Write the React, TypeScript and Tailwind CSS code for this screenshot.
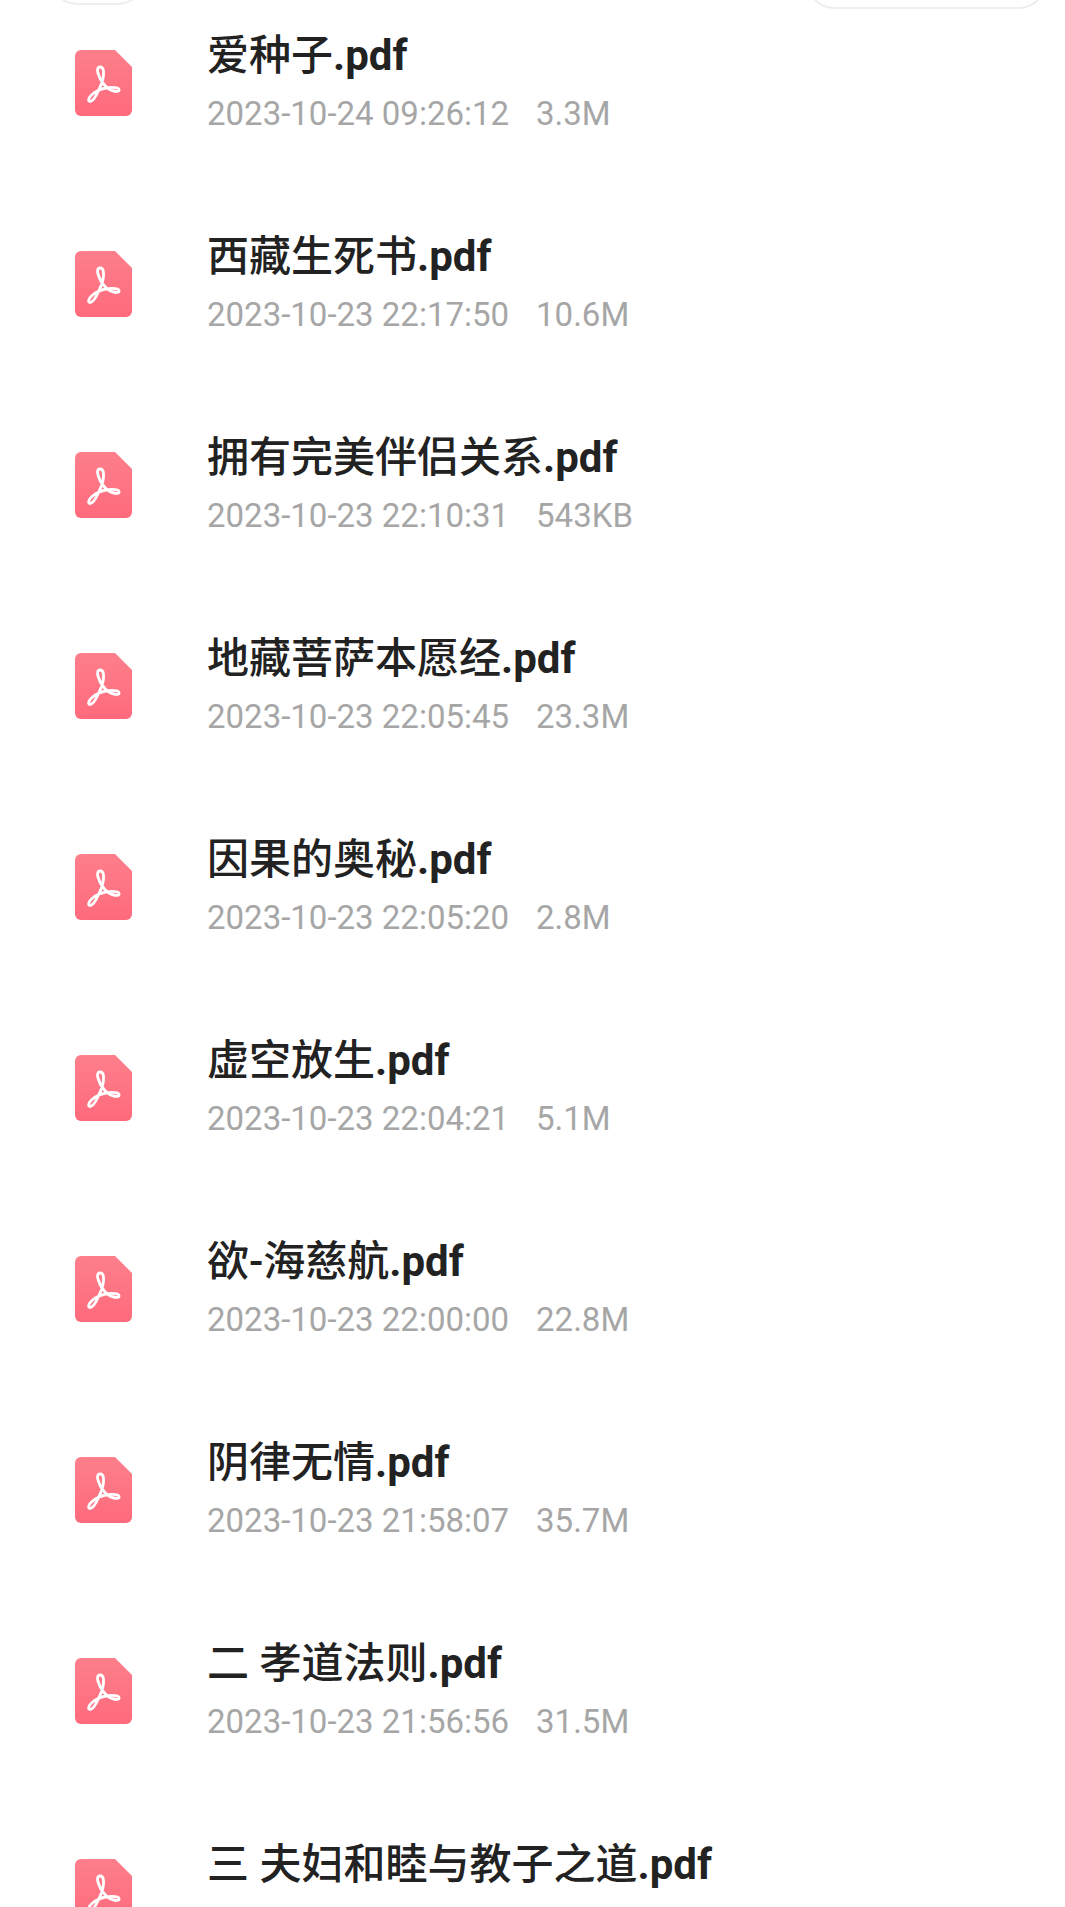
const files = [
  { name: "爱种子", date: "2023-10-24 09:26:12", size: "3.3M" },
  { name: "西藏生死书", date: "2023-10-23 22:17:50", size: "10.6M" },
  { name: "拥有完美伴侣关系", date: "2023-10-23 22:10:31", size: "543KB" },
  { name: "地藏菩萨本愿经", date: "2023-10-23 22:05:45", size: "23.3M" },
  { name: "因果的奥秘", date: "2023-10-23 22:05:20", size: "2.8M" },
  { name: "虚空放生", date: "2023-10-23 22:04:21", size: "5.1M" },
  { name: "欲-海慈航", date: "2023-10-23 22:00:00", size: "22.8M" },
  { name: "阴律无情", date: "2023-10-23 21:58:07", size: "35.7M" },
  { name: "二 孝道法则", date: "2023-10-23 21:56:56", size: "31.5M" },
  // last row runs off the bottom, its date line is not visible
  { name: "三 夫妇和睦与教子之道", date: "", size: "" },
];

function PdfIcon() {
  return (
    <svg width="57" height="66" viewBox="0 0 57 66" className="shrink-0">
      <defs>
        <linearGradient id="pdfFill" x1="0" y1="0" x2="0" y2="1">
          <stop offset="0" stopColor="#fd7f8b" />
          <stop offset="1" stopColor="#fe6a7c" />
        </linearGradient>
      </defs>
      <path d="M6 0H40L57 17V60a6 6 0 0 1-6 6H6a6 6 0 0 1-6-6V6a6 6 0 0 1 6-6Z" fill="url(#pdfFill)" />
      <path
        d="M25 17c-2.500 0-3 3-2 6 2 7 5 12 11 16 3 2 9 3.500 10 1.500 1-2.500-4-3.500-9-3-8 .5-14 3-19 8-3 3-3 6-1 6 3 0 6-5 9-12 3-6 5-12 4.500-18-.2-3-1.500-4.500-3.500-4.500Z"
        fill="none"
        stroke="#fff"
        strokeWidth="2.800"
        strokeLinejoin="round"
      />
    </svg>
  );
}

export default function App() {
  return (
    <div className="h-[1907px] overflow-hidden bg-white font-['Roboto','Noto_Sans_CJK_SC',sans-serif]">
      {/* bottoms of the filter pills, mostly scrolled away */}
      <div className="flex h-0 justify-between pl-[48px] pr-[17px]">
        <div className="-mt-[55px] h-[60px] w-[99px] rounded-[30px] border-2 border-[#eeeeee]" />
        <div className="-mt-[51px] h-[60px] w-[243px] rounded-[30px] border-2 border-[#eeeeee]" />
      </div>
      <div className="-mt-[18px]">
        {files.map((f) => (
          <div key={f.name} className="flex h-[201px] items-center pl-[75px]">
            <PdfIcon />
            <div className="ml-[75px] min-w-0 pb-[2px]">
              <div className="whitespace-nowrap text-[42px] leading-[56px] font-medium text-[#222222]">
                {f.name}
                <span className="font-bold">.pdf</span>
              </div>
              <div className="mt-[8px] flex h-[44px] text-[33px] leading-[44px] text-[#a6a6a6]">
                <span>{f.date}</span>
                <span className="ml-[27px]">{f.size}</span>
              </div>
            </div>
          </div>
        ))}
      </div>
    </div>
  );
}
